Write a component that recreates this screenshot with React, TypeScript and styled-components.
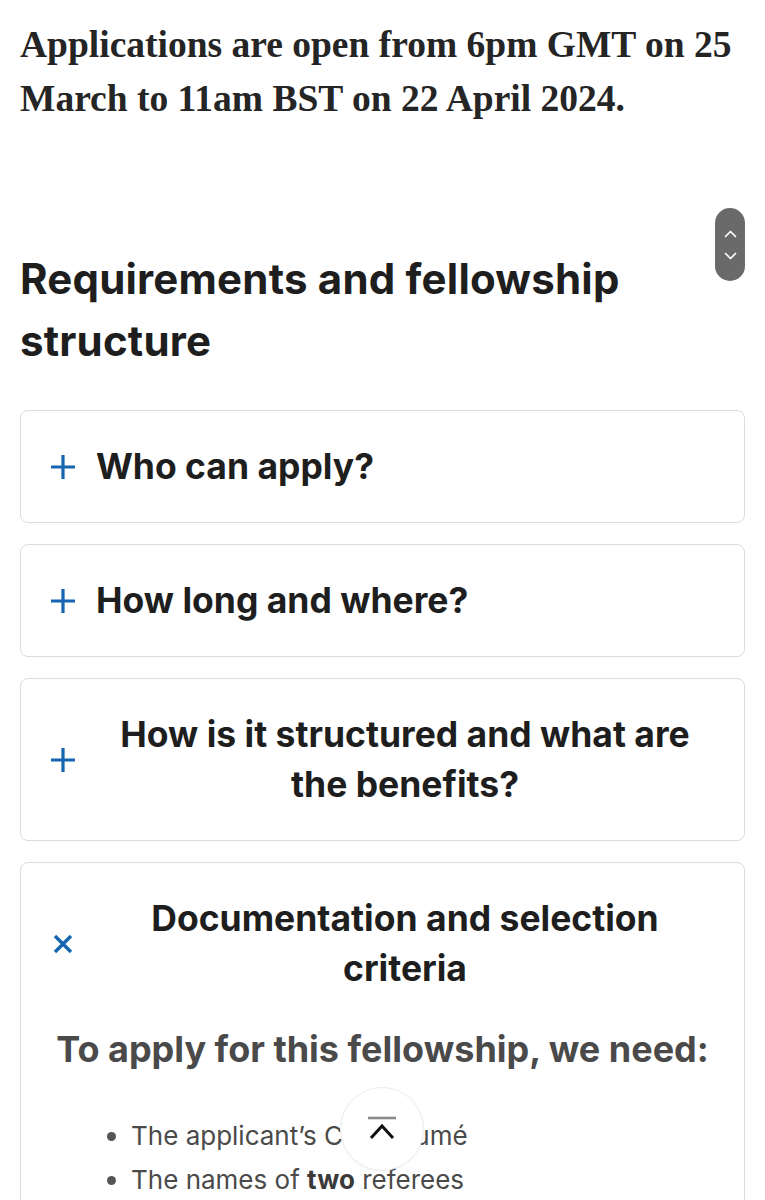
import React from 'react'
import styled, { createGlobalStyle } from 'styled-components'

const Global = createGlobalStyle`
  html, body {
    margin: 0;
    padding: 0;
    background: #ffffff;
  }
  body {
    font-family: Inter, "Noto Sans", sans-serif;
    color: #1f1f1f;
  }
`

const Page = styled.main`
  padding: 18px 20px 0 20px;
  position: relative;
  height: 1200px;
  overflow: hidden;
  box-sizing: border-box;
`

const Intro = styled.p`
  margin: 0;
  font-family: "Liberation Serif", "Times New Roman", serif;
  font-weight: 700;
  font-size: 37.5px;
  line-height: 54px;
  color: #252525;
`

const Heading = styled.h2`
  margin: 122px 0 38px 0;
  font-size: 42px;
  line-height: 62px;
  font-weight: 700;
  color: #1e1e1e;
  letter-spacing: 0.2px;
`

const List = styled.div`
  display: flex;
  flex-direction: column;
  gap: 21px;
`

const Card = styled.section`
  border: 1.5px solid #dcdcdc;
  border-radius: 8px;
  background: #fff;
`

const Toggle = styled.div`
  display: flex;
  align-items: center;
  gap: 20px;
  padding: 31px 30px 30px 29px;
`

const Icon = styled.span`
  flex: 0 0 auto;
  width: 26px;
  height: 26px;
  display: flex;
  align-items: center;
  justify-content: center;
  color: #1565b0;
`

const Title = styled.span`
  font-size: 35.5px;
  line-height: 50px;
  font-weight: 700;
  text-align: center;
  color: #1e1e1e;
`

const Body = styled.div`
  padding: 0 30px 30px 30px;
`

const SubHeading = styled.h3`
  margin: 0 0 40px 0;
  text-align: center;
  font-size: 36px;
  line-height: 50px;
  font-weight: 700;
  color: #4a4a4a;
`

const Items = styled.ul`
  margin: 0;
  padding: 0 0 0 80px;
  list-style: none;
  font-size: 26px;
  line-height: 44px;
  color: #4a4a4a;
  b {
    color: #3a3a3a;
  }
`

const Item = styled.li`
  position: relative;
  &::before {
    content: '';
    position: absolute;
    left: -24px;
    top: 18px;
    width: 9px;
    height: 9px;
    border-radius: 50%;
    background: #555;
  }
`

const ScrollNav = styled.div`
  position: absolute;
  top: 208px;
  right: 20px;
  width: 30px;
  height: 73px;
  border-radius: 15px;
  background: #6a6a6a;
  display: flex;
  flex-direction: column;
  align-items: center;
  justify-content: center;
  gap: 14px;
`

const TopButton = styled.button`
  position: absolute;
  left: 340px;
  top: 1087px;
  width: 84px;
  height: 84px;
  border-radius: 50%;
  border: 1.5px solid #ececec;
  background: #fff;
  box-shadow: 0 1px 3px rgba(0, 0, 0, 0.04);
  display: flex;
  align-items: center;
  justify-content: center;
  padding: 0;
`

const Plus = () => (
  <svg width="26" height="26" viewBox="0 0 26 26">
    <path d="M13 1v24M1 13h24" stroke="currentColor" strokeWidth="3.2" fill="none" />
  </svg>
)

const Cross = () => (
  <svg width="22" height="22" viewBox="0 0 22 22">
    <path d="M3 3l16 16M19 3L3 19" stroke="currentColor" strokeWidth="3.4" fill="none" />
  </svg>
)

const Chevron = ({ down }: { down?: boolean }) => (
  <svg width="13" height="8" viewBox="0 0 13 8">
    <path d={down ? 'M1.5 1.5L6.5 6.5l5-5' : 'M1.5 6.5L6.5 1.5l5 5'} stroke="#fff" strokeWidth="1.7" fill="none" strokeLinecap="round" strokeLinejoin="round" />
  </svg>
)

const items = [
  { title: 'Who can apply?' },
  { title: 'How long and where?' },
  { title: 'How is it structured and what are the benefits?' },
]

export default function App() {
  return (
    <>
      <Global />
      <Page>
        <Intro>
          Applications are open from 6pm GMT on 25 March to 11am BST on 22 April 2024.
        </Intro>
        <Heading>Requirements and fellowship structure</Heading>
        <List>
          {items.map((it) => (
            <Card key={it.title}>
              <Toggle>
                <Icon><Plus /></Icon>
                <Title>{it.title}</Title>
              </Toggle>
            </Card>
          ))}
          <Card>
            <Toggle>
              <Icon><Cross /></Icon>
              <Title>Documentation and selection criteria</Title>
            </Toggle>
            <Body>
              <SubHeading>To apply for this fellowship, we need:</SubHeading>
              <Items>
                <Item>The applicant’s CV/Résumé</Item>
                <Item>The names of <b>two</b> referees</Item>
              </Items>
            </Body>
          </Card>
        </List>
        <ScrollNav>
          <Chevron />
          <Chevron down />
        </ScrollNav>
        <TopButton aria-label="Back to top">
          <svg width="34" height="26" viewBox="0 0 34 26">
            <path d="M3 2h28" stroke="#8a8a8a" strokeWidth="2.6" />
            <path d="M6 22L17 10l11 12" stroke="#111" strokeWidth="3" fill="none" />
          </svg>
        </TopButton>
      </Page>
    </>
  )
}
